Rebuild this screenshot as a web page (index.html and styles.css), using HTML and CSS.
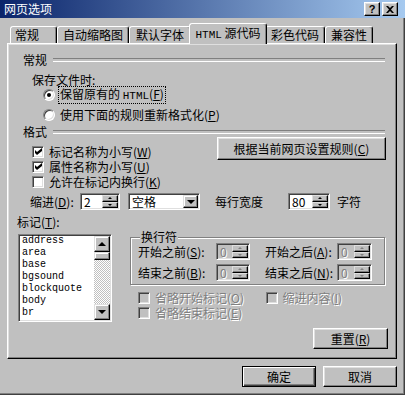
FILE: index.html
```html
<!DOCTYPE html>
<html lang="zh-CN">
<head>
  <meta charset="UTF-8">
  <meta name="viewport" content="width=device-width, initial-scale=1.0">
  <title>网页选项</title>
  <link rel="stylesheet" href="styles.css">
</head>
<body>

<div class="window">
  <div class="titlebar">
    <span class="title">网页选项</span>
    <div class="caption">
      <span class="cap-btn">?</span>
      <span class="cap-btn">
        <svg width="8" height="7" viewBox="0 0 8 7"><path d="M0 0h2l2 2 2-2h2L5 3.5 8 7H6L4 5 2 7H0l3-3.5z" fill="#000"/></svg>
      </span>
    </div>
  </div>

  <div class="tabs">
    <div class="tab t1">常规</div>
    <div class="tab t2">自动缩略图</div>
    <div class="tab t3">默认字体</div>
    <div class="tab active"><span class="en">HTML</span> 源代码</div>
    <div class="tab t5">彩色代码</div>
    <div class="tab t6">兼容性</div>
  </div>

  <div class="panel">
    <div class="section sec-general"><span>常规</span></div>
    <div class="save-label">保存文件时:</div>
    <div class="radio-row">
      <span class="radio checked"></span>
      <span class="focus">保留原有的 <span class="en">HTML</span>(<u>F</u>)</span>
    </div>
    <div class="radio-row second">
      <span class="radio"></span>
      <span class="rlabel">使用下面的规则重新格式化(<u>P</u>)</span>
    </div>

    <div class="section sec-format"><span>格式</span></div>
    <div class="format">
      <div class="checks">
        <div class="check-row"><span class="check"><svg width="7" height="7" viewBox="0 0 7 7"><path d="M0 2l2 2 5-4v3L2 7 0 5z" fill="#000"/></svg></span>标记名称为小写(<u>W</u>)</div>
        <div class="check-row"><span class="check"><svg width="7" height="7" viewBox="0 0 7 7"><path d="M0 2l2 2 5-4v3L2 7 0 5z" fill="#000"/></svg></span>属性名称为小写(<u>U</u>)</div>
        <div class="check-row"><span class="check"></span>允许在标记内换行(<u>K</u>)</div>
      </div>
      <button class="btn rules">根据当前网页设置规则(<u>C</u>)</button>
    </div>

    <div class="indent-row">
      <span class="lbl-indent">缩进(<u>D</u>):</span>
      <span class="spin w-indent"><span class="val">2</span><span class="spin-btns"><i class="up"></i><i class="down"></i></span></span>
      <span class="combo"><span class="val">空格</span><span class="drop"></span></span>
      <span class="lbl-width">每行宽度</span>
      <span class="spin w-line"><span class="val">80</span><span class="spin-btns"><i class="up"></i><i class="down"></i></span></span>
      <span class="lbl-chars">字符</span>
    </div>

    <div class="tags-label">标记(<u>T</u>):</div>
    <div class="tags">
      <div class="listbox">
        <ul class="items">
          <li>address</li>
          <li>area</li>
          <li>base</li>
          <li>bgsound</li>
          <li>blockquote</li>
          <li>body</li>
          <li>br</li>
        </ul>
        <div class="vscroll">
          <span class="sb-btn up"></span>
          <span class="sb-thumb"></span>
          <span class="sb-track"></span>
          <span class="sb-btn down"></span>
        </div>
      </div>

      <div class="tag-opts">
        <div class="group">
          <span class="legend">换行符</span>
          <div class="group-row">
            <span class="glabel">开始之前(<u>S</u>):</span>
            <span class="spin off w-a"><span class="val">0</span><span class="spin-btns"><i class="up"></i><i class="down"></i></span></span>
            <span class="glabel second">开始之后(<u>A</u>):</span>
            <span class="spin off w-b"><span class="val">0</span><span class="spin-btns"><i class="up"></i><i class="down"></i></span></span>
          </div>
          <div class="group-row">
            <span class="glabel">结束之前(<u>B</u>):</span>
            <span class="spin off w-a"><span class="val">0</span><span class="spin-btns"><i class="up"></i><i class="down"></i></span></span>
            <span class="glabel second">结束之后(<u>N</u>):</span>
            <span class="spin off w-b"><span class="val">0</span><span class="spin-btns"><i class="up"></i><i class="down"></i></span></span>
          </div>
        </div>
        <div class="dis-row first">
          <span class="dis-item"><span class="check off"></span>省略开始标记(<u>O</u>)</span>
          <span class="dis-item"><span class="check off"></span>缩进内容(<u>I</u>)</span>
        </div>
        <div class="dis-row">
          <span class="dis-item"><span class="check off"></span>省略结束标记(<u>E</u>)</span>
        </div>
      </div>
    </div>

    <div class="reset-row">
      <button class="btn reset">重置(<u>R</u>)</button>
    </div>
  </div>

  <div class="footer">
    <button class="btn default">确定</button>
    <button class="btn">取消</button>
  </div>
</div>

</body>
</html>
```

FILE: styles.css
```css
* {
  box-sizing: border-box;
}
body {
  margin: 0;
  background-color: #c0c0c0;
  font-family: "Noto Sans CJK SC", sans-serif;
  font-size: 12px;
  color: #000;
}
u {
  text-underline-offset: 1px;
}
.en {
  font-family: "Liberation Mono", "Noto Sans CJK SC", monospace;
  font-size: 11px;
}
.window {
  width: 405px;
  height: 395px;
  background-color: #c0c0c0;
  overflow: hidden;
  box-shadow: inset -1px -1px #404040, inset -2px -2px #808080;
}

/* title bar */
.titlebar {
  height: 18px;
  display: flex;
  align-items: center;
  justify-content: space-between;
  padding: 0 7px 0 4px;
  background: linear-gradient(to right, #0a246a, #a6caf0);
  color: #fff;
  line-height: 18px;
}
.caption {
  display: flex;
  gap: 2px;
}
.cap-btn {
  width: 16px;
  height: 14px;
  display: flex;
  align-items: center;
  justify-content: center;
  background-color: #c0c0c0;
  border: 1px solid;
  border-color: #fff #000 #000 #fff;
  box-shadow: inset -1px -1px #808080, inset 1px 1px #dfdfdf;
  color: #000;
  font: bold 11px "Liberation Sans", sans-serif;
}

/* tabs */
.tabs {
  display: flex;
  align-items: flex-start;
  height: 21px;
  margin-top: 5px;
  padding-left: 10px;
  position: relative;
  z-index: 1;
}
.tab {
  height: 17px;
  margin-top: 3px;
  line-height: 15px;
  text-align: center;
  background-color: #c0c0c0;
  border: 1px solid;
  border-bottom: 0;
  border-color: #fff #000 transparent #fff;
  border-radius: 3px 3px 0 0;
  box-shadow: inset -1px 0 #808080;
}
.t1 { width: 47px; text-align: left; padding-left: 4px; }
.t2 { width: 72px; }
.t3 { width: 62px; }
.t5 { width: 60px; }
.t6 { width: 48px; }
.tab.active {
  width: 78px;
  height: 21px;
  margin: 0 -2px;
  line-height: 18px;
  position: relative;
  z-index: 2;
}

/* panel */
.panel {
  margin: -1px 0 0 7px;
  width: 390px;
  height: 316px;
  border: 1px solid;
  border-color: #fff #000 #000 #fff;
  box-shadow: inset -1px -1px #808080, inset 1px 1px #dfdfdf;
}
.section {
  display: flex;
  align-items: center;
  height: 12px;
  padding: 0 11px 0 15px;
  line-height: 12px;
}
.section::after {
  content: "";
  flex: 1;
  height: 2px;
  margin-left: 6px;
  border-top: 1px solid #808080;
  border-bottom: 1px solid #fff;
}
.sec-general {
  margin-top: 10px;
}
.sec-format {
  margin-top: 3px;
  height: 11px;
}
.save-label {
  margin: 7px 0 0 24px;
  height: 14px;
  line-height: 14px;
}

/* radios */
.radio-row {
  display: flex;
  align-items: center;
  height: 16px;
  padding-left: 35px;
}
.radio-row.second {
  margin-top: 4px;
}
.radio {
  flex: none;
  position: relative;
  width: 12px;
  height: 12px;
  border-radius: 50%;
  background-color: #fff;
  border: 1px solid;
  border-color: #808080 #fff #fff #808080;
  box-shadow: inset 1px 1px #404040, inset -1px -1px #dfdfdf;
}
.radio.checked::after {
  content: "";
  position: absolute;
  left: 3px;
  top: 3px;
  width: 4px;
  height: 4px;
  border-radius: 50%;
  background-color: #000;
}
.focus {
  margin-left: 3px;
  padding: 0 1px;
  border: 1px dotted #000;
  line-height: 14px;
}
.rlabel {
  margin-left: 5px;
  line-height: 14px;
}

/* checkboxes */
.format {
  display: flex;
  align-items: flex-start;
}
.checks {
  flex: 1;
  padding-top: 7px;
}
.check-row {
  display: flex;
  align-items: center;
  height: 15px;
  padding-left: 24px;
  line-height: 15px;
}
.check {
  flex: none;
  width: 12px;
  height: 12px;
  margin-right: 5px;
  display: flex;
  align-items: center;
  justify-content: center;
  background-color: #fff;
  border: 1px solid;
  border-color: #808080 #fff #fff #808080;
  box-shadow: inset 1px 1px #404040, inset -1px -1px #dfdfdf;
}
.check.off {
  background-color: #c0c0c0;
}

/* buttons */
.btn {
  font-family: inherit;
  font-size: 12px;
  padding: 0;
  line-height: 1;
  color: #000;
  background-color: #c0c0c0;
  border: 1px solid;
  border-color: #fff #000 #000 #fff;
  box-shadow: inset -1px -1px #808080, inset 1px 1px #dfdfdf;
}
.rules {
  flex: none;
  width: 169px;
  height: 23px;
  margin-right: 10px;
}
.btn.default {
  border-color: #000;
  box-shadow: inset 1px 1px #fff, inset -1px -1px #404040, inset -2px -2px #808080;
}

/* indent row */
.indent-row {
  display: flex;
  align-items: center;
  height: 17px;
  margin-top: 4px;
  padding-left: 22px;
}
.lbl-indent { width: 50px; }
.lbl-width { width: 73px; margin-left: 15px; }
.lbl-chars { margin-left: 7px; }
.w-indent { width: 40px; }
.w-line { width: 42px; }

.spin {
  flex: none;
  display: flex;
  height: 17px;
  background-color: #fff;
  border: 1px solid;
  border-color: #808080 #fff #fff #808080;
  box-shadow: inset 1px 1px #404040, inset -1px -1px #dfdfdf;
  padding: 1px;
}
.spin .val {
  flex: 1;
  padding-left: 2px;
  line-height: 13px;
}
.spin-btns {
  width: 16px;
  display: flex;
  flex-direction: column;
}
.spin-btns i {
  flex: 1;
  display: flex;
  align-items: center;
  justify-content: center;
  background-color: #c0c0c0;
  border: 1px solid;
  border-color: #dfdfdf #000 #000 #dfdfdf;
  box-shadow: inset -1px -1px #808080;
}
.spin-btns i::after {
  content: "";
  border-left: 2px solid transparent;
  border-right: 2px solid transparent;
}
.spin-btns .up::after { border-bottom: 2px solid #000; }
.spin-btns .down::after { border-top: 2px solid #000; }
.spin.off {
  background-color: #c0c0c0;
}
.spin.off .val {
  color: #808080;
  text-shadow: 1px 1px #fff;
}
.spin.off .up::after { border-bottom-color: #808080; }
.spin.off .down::after { border-top-color: #808080; }

.combo {
  flex: none;
  display: flex;
  width: 72px;
  height: 17px;
  margin-left: 8px;
  background-color: #fff;
  border: 1px solid;
  border-color: #808080 #fff #fff #808080;
  box-shadow: inset 1px 1px #404040, inset -1px -1px #dfdfdf;
  padding: 1px;
}
.combo .val {
  flex: 1;
  padding-left: 2px;
  line-height: 13px;
}
.drop {
  width: 15px;
  display: flex;
  align-items: center;
  justify-content: center;
  background-color: #c0c0c0;
  border: 1px solid;
  border-color: #dfdfdf #000 #000 #dfdfdf;
  box-shadow: inset -1px -1px #808080, inset 1px 1px #fff;
}
.drop::after {
  content: "";
  border-left: 4px solid transparent;
  border-right: 4px solid transparent;
  border-top: 4px solid #000;
}

/* tag list */
.tags-label {
  margin: 5px 0 0 9px;
  height: 14px;
  line-height: 14px;
}
.tags {
  display: flex;
  align-items: flex-start;
}
.listbox {
  flex: none;
  display: flex;
  width: 94px;
  height: 88px;
  margin: 5px 0 0 10px;
  padding: 1px;
  background-color: #fff;
  border: 1px solid;
  border-color: #808080 #fff #fff #808080;
  box-shadow: inset 1px 1px #404040, inset -1px -1px #dfdfdf;
}
.items {
  flex: 1;
  list-style: none;
  margin: -1px 0 0;
  padding: 0 0 0 2px;
  font-family: "Liberation Mono", monospace;
  font-size: 10px;
  line-height: 12px;
  overflow: hidden;
}
.vscroll {
  width: 16px;
  display: flex;
  flex-direction: column;
}
.sb-btn,
.sb-thumb {
  display: flex;
  align-items: center;
  justify-content: center;
  background-color: #c0c0c0;
  border: 1px solid;
  border-color: #dfdfdf #000 #000 #dfdfdf;
  box-shadow: inset -1px -1px #808080, inset 1px 1px #fff;
}
.sb-btn {
  height: 16px;
}
.sb-thumb {
  height: 8px;
}
.sb-track {
  flex: 1;
  background: repeating-conic-gradient(#fff 0 25%, #c0c0c0 0 50%) 0 0 / 2px 2px;
}
.sb-btn::after {
  content: "";
  border-left: 4px solid transparent;
  border-right: 4px solid transparent;
}
.sb-btn.up::after { border-bottom: 4px solid #000; }
.sb-btn.down::after { border-top: 4px solid #000; }

.tag-opts {
  width: 255px;
  margin: 8px 0 0 18px;
}
.group {
  position: relative;
  height: 48px;
  padding: 5px 0 0 7px;
  border: 1px solid #808080;
  box-shadow: inset 1px 1px #fff, 1px 1px #fff;
}
.legend {
  position: absolute;
  left: 9px;
  top: -8px;
  padding: 0 1px;
  line-height: 14px;
  background-color: #c0c0c0;
}
.group-row {
  display: flex;
  align-items: center;
  height: 17px;
}
.group-row + .group-row {
  margin-top: 4px;
}
.glabel { width: 78px; }
.glabel.second { width: 72px; margin-left: 15px; }
.w-a { width: 34px; }
.w-b { width: 35px; }

.dis-row {
  display: flex;
  align-items: center;
  height: 15px;
}
.dis-row.first {
  margin-top: 5px;
}
.dis-item {
  display: flex;
  align-items: center;
  width: 129px;
  padding-left: 8px;
  color: #808080;
  text-shadow: 1px 1px #fff;
}
.dis-item .check {
  margin-right: 5px;
}

.reset-row {
  display: flex;
  justify-content: flex-end;
  margin-top: 6px;
  padding-right: 8px;
}
.reset {
  width: 75px;
  height: 21px;
}

/* dialog buttons */
.footer {
  display: flex;
  justify-content: flex-end;
  gap: 7px;
  margin-top: 7px;
  padding-right: 8px;
}
.footer .btn {
  width: 74px;
  height: 21px;
}
```
